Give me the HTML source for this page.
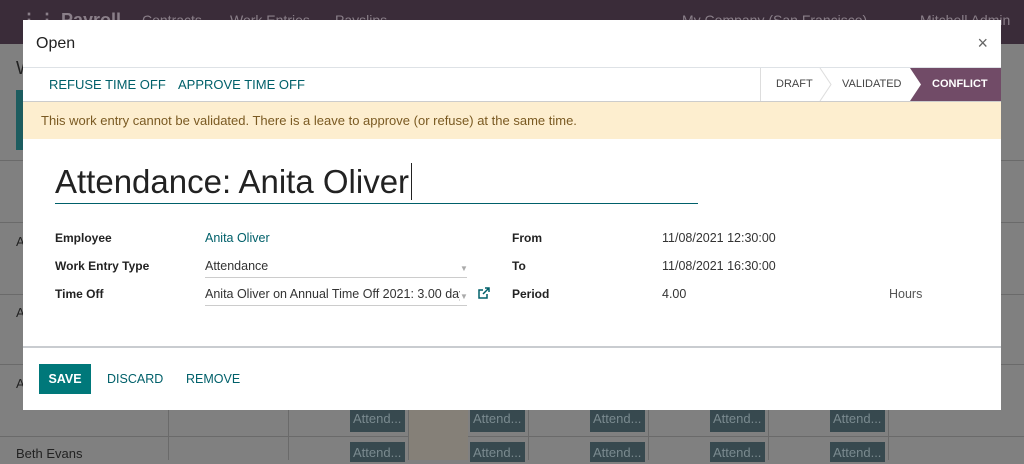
<!DOCTYPE html>
<html><head><style>
body{margin:0;width:1024px;height:460px;overflow:hidden;position:relative;background:#808080;font-family:"Liberation Sans",sans-serif;}
.nav{position:absolute;left:0;top:0;width:1024px;height:44px;background:#3a2c39;}
.nav span{position:absolute;top:12px;color:#8a7f89;font-size:14px}
.hl{position:absolute;left:0;width:1024px;height:1px;background:#6a6a6a}
.vl{position:absolute;top:160px;width:1px;height:300px;background:#6a6a6a}
.att{position:absolute;width:55px;background:#37494f;color:#7a8a8f;font-size:13px;padding-left:3px;box-sizing:border-box;line-height:22px}
.modal{position:absolute;left:23px;top:20px;width:978px;height:390px;background:#fff}
.hdr{height:47px;border-bottom:1px solid #dee2e6;position:relative}
.hdr .t{position:absolute;left:13px;top:15px;font-size:16px;color:#222}
.hdr .x{position:absolute;right:13px;top:13px;font-size:18px;color:#666}
.sb{height:33px;border-bottom:1px solid #ccc;position:relative;font-size:13px}
.sb .b{position:absolute;top:9px;color:#00606a}
.st{position:absolute;top:0;height:33px;line-height:33px;font-size:11px;color:#444}
.warn{height:37px;background:#fdeecf;color:#7a5a22;font-size:13px;line-height:37px;padding-left:18px}
.lbl{position:absolute;font-size:12px;font-weight:bold;color:#222}
.val{position:absolute;font-size:12.5px;color:#333}
.nm{position:absolute;left:16px;font-size:13px;color:#222}
</style></head><body>
<div class="nav">
<span style="left:20px;font-weight:bold;font-size:18px;top:10px">⋮⋮ Payroll</span>
<span style="left:142px">Contracts</span><span style="left:230px">Work Entries</span><span style="left:335px">Payslips</span>
<span style="left:682px">My Company (San Francisco)</span><span style="left:920px">Mitchell Admin</span>
</div>
<div style="position:absolute;left:16px;top:90px;width:8px;height:60px;background:#1d5c5f"></div>
<div class="hl" style="top:160px"></div><div class="hl" style="top:222px"></div><div class="hl" style="top:294px"></div><div class="hl" style="top:364px"></div><div class="hl" style="top:436px"></div>
<div class="vl" style="left:168px"></div><div class="vl" style="left:288px"></div><div class="vl" style="left:408px"></div><div class="vl" style="left:528px"></div><div class="vl" style="left:648px"></div><div class="vl" style="left:768px"></div><div class="vl" style="left:888px"></div>
<div style="position:absolute;left:409px;top:160px;width:59px;height:300px;background:#858078"></div>
<div class="nm" style="top:234px">A</div><div class="nm" style="top:305px">A</div><div class="nm" style="top:376px">A</div>
<div class="att" style="left:350px;top:408px;height:24px">Attend...</div><div class="att" style="left:470px;top:408px;height:24px">Attend...</div><div class="att" style="left:590px;top:408px;height:24px">Attend...</div><div class="att" style="left:710px;top:408px;height:24px">Attend...</div><div class="att" style="left:830px;top:408px;height:24px">Attend...</div>
<div class="att" style="left:350px;top:442px;height:20px">Attend...</div><div class="att" style="left:470px;top:442px;height:20px">Attend...</div><div class="att" style="left:590px;top:442px;height:20px">Attend...</div><div class="att" style="left:710px;top:442px;height:20px">Attend...</div><div class="att" style="left:830px;top:442px;height:20px">Attend...</div>
<div style="position:absolute;left:16px;top:446px;font-size:13px;color:#222">Beth Evans</div>
<div style="position:absolute;left:16px;top:58px;font-size:18px;color:#222">W</div>
<div class="modal">
<div class="hdr"><div class="t">Open</div><div class="x">×</div></div>
<div class="sb">
<div class="b" style="left:26px">REFUSE TIME OFF</div><div class="b" style="left:155px">APPROVE TIME OFF</div>
<div style="position:absolute;left:737px;top:0;width:1px;height:33px;background:#ddd"></div>
<div class="st" style="left:753px">DRAFT</div>
<svg style="position:absolute;left:796px;top:0" width="14" height="33"><path d="M1 0L12 16.5L1 33" fill="none" stroke="#ddd"/></svg>
<div class="st" style="left:819px">VALIDATED</div>
<svg style="position:absolute;left:887px;top:0" width="91" height="33"><path d="M0 0H91V33H0L11 16.5Z" fill="#714b67"/></svg>
<div class="st" style="left:909px;color:#fff;font-weight:bold">CONFLICT</div>
</div>
<div class="warn">This work entry cannot be validated. There is a leave to approve (or refuse) at the same time.</div>
<div style="position:absolute;left:32px;top:143px;font-size:33px;color:#222">Attendance: Anita Oliver<span style="border-left:1.5px solid #222;margin-left:2px"></span></div>
<div style="position:absolute;left:32px;top:183px;width:643px;height:1px;background:#00606a"></div>
<div class="lbl" style="left:32px;top:211px">Employee</div><div class="val" style="left:182px;top:211px;color:#00606a">Anita Oliver</div>
<div class="lbl" style="left:32px;top:239px">Work Entry Type</div><div class="val" style="left:182px;top:239px">Attendance</div>
<div style="position:absolute;left:182px;top:257px;width:262px;height:1px;background:#ccc"></div>
<div class="lbl" style="left:32px;top:267px">Time Off</div><div class="val" style="left:182px;top:267px;width:255px;overflow:hidden;white-space:nowrap">Anita Oliver on Annual Time Off 2021: 3.00 days</div>
<div style="position:absolute;left:182px;top:285px;width:262px;height:1px;background:#ccc"></div>
<div style="position:absolute;left:437px;top:244px;font-size:8px;color:#aaa">▼</div><div style="position:absolute;left:437px;top:272px;font-size:8px;color:#aaa">▼</div>
<svg style="position:absolute;left:455px;top:267px" width="12" height="12"><path d="M9 7v4H1V3h4M7 1h4v4M11 1L5 7" fill="none" stroke="#00606a" stroke-width="1.5"/></svg>
<div class="lbl" style="left:489px;top:211px">From</div><div class="val" style="left:639px;top:211px">11/08/2021 12:30:00</div>
<div class="lbl" style="left:489px;top:239px">To</div><div class="val" style="left:639px;top:239px">11/08/2021 16:30:00</div>
<div class="lbl" style="left:489px;top:267px">Period</div><div class="val" style="left:639px;top:267px">4.00</div><div class="val" style="left:866px;top:267px;color:#555">Hours</div>
<div style="position:absolute;left:0;top:326px;width:978px;height:2px;background:#c9ccd0"></div>
<div style="position:absolute;left:16px;top:344px;width:52px;height:30px;background:#00787a;color:#fff;font-size:12.5px;font-weight:bold;line-height:30px;text-align:center">SAVE</div>
<div style="position:absolute;left:84px;top:352px;font-size:12.5px;color:#00606a">DISCARD</div>
<div style="position:absolute;left:163px;top:352px;font-size:12.5px;color:#00606a">REMOVE</div>
</div>
</body></html>
